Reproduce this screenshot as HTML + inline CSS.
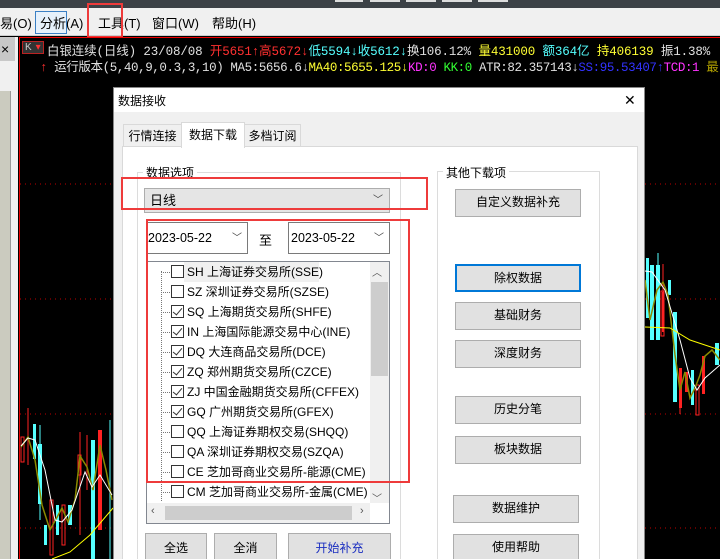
<!DOCTYPE html>
<html><head><meta charset="utf-8"><style>
*{margin:0;padding:0;box-sizing:border-box}
html,body{width:720px;height:559px;overflow:hidden}
body{position:relative;background:#000;font-family:"Liberation Sans","Noto Sans CJK SC",sans-serif;font-size:12px;color:#000}
.a{position:absolute}
.menu span{position:absolute;top:13px;font-size:13px}
.btn{position:absolute;background:#e1e1e1;border:1px solid #adadad;text-align:center;font-size:12px;line-height:25px}
.row{position:absolute;left:171px;height:20px;font-size:12px;line-height:20px;white-space:nowrap}
.cb{display:inline-block;width:13px;height:13px;border:1px solid #333;background:#fff;vertical-align:-2px;margin-right:3px;position:relative}
.cb.c::after{content:"";position:absolute;left:3px;top:0px;width:4px;height:8px;border:solid #333;border-width:0 1.5px 1.5px 0;transform:rotate(40deg)}
.dot{position:absolute;left:161px;width:9px;border-top:1px dotted #777}
.info{position:absolute;font-family:"Liberation Mono","Noto Sans CJK SC",monospace;font-size:12.5px;white-space:nowrap}
.w{color:#e0e0e0}.r{color:#ff3030}.c{color:#55ffff}.y{color:#ffff33}.m{color:#ff33ff}.g{color:#33ff33}.b{color:#3333ff}.o{color:#b0a000}
</style></head><body>
<div class="a" style="left:0;top:0;width:720px;height:8px;background:#3c4146"></div>
<div class="a" style="left:335px;top:0;width:28px;height:2px;background:#ddd"></div>
<div class="a" style="left:370px;top:0;width:30px;height:2px;background:#ddd"></div>
<div class="a" style="left:406px;top:0;width:30px;height:2px;background:#ddd"></div>
<div class="a" style="left:442px;top:0;width:30px;height:2px;background:#ddd"></div>
<div class="a" style="left:478px;top:0;width:30px;height:2px;background:#ddd"></div>
<div class="a menu" style="left:0;top:8px;width:720px;height:28px;background:#f0f0f0;border-bottom:1px solid #ccc">
<span style="left:0;top:5px">易(O)</span>
<div class="a" style="left:35px;top:3px;width:32px;height:23px;border:1px solid #3a7fc4;background:#e5f0fb"></div>
<span style="left:40px;top:5px">分析(A)</span>
<span style="left:98px;top:5px">工具(T)</span>
<span style="left:152px;top:5px">窗口(W)</span>
<span style="left:212px;top:5px">帮助(H)</span>
</div>
<div class="a" style="left:87px;top:3px;width:36px;height:35px;border:2px solid #ee3b3b"></div>
<div class="a" style="left:0;top:37px;width:18px;height:522px;background:#f0f0f0"></div>
<div class="a" style="left:0;top:37px;width:15px;height:24px;background:#c8c8c8;font-size:14px;line-height:24px;padding-left:1px">×</div>
<div class="a" style="left:0;top:91px;width:11px;height:468px;background:#cbcbbf;border-right:1px solid #999"></div>
<div class="a" style="left:19px;top:37px;width:1px;height:522px;background:#e00"></div>
<div class="a" style="left:19px;top:37px;width:701px;height:1px;background:#e00"></div>
<div class="a" style="left:22px;top:41px;width:22px;height:13px;border:1px solid #b22;background:#333;font-size:10px;color:#ccc;line-height:11px;padding-left:2px">K<span style="color:#f33;margin-left:4px">▾</span></div>
<div class="info" style="top:40px;left:47px;letter-spacing:-0.12px"><span class="w">白银连续(日线) 23/08/08 </span><span class="r">开5651↑高5672↓</span><span class="c">低5594↓收5612↓</span><span class="w">换106.12% </span><span class="y">量431000 </span><span class="c">额364亿 </span><span class="y">持406139 </span><span class="w">振1.38%</span></div>
<div class="info" style="top:56px;left:40px;letter-spacing:-0.4px"><span class="r">↑ </span><span class="w">运行版本(5,40,9,0.3,3,10) MA5:5656.6↓</span><span class="y">MA40:5655.125↓</span><span class="m">KD:0 </span><span class="g">KK:0 </span><span class="w">ATR:82.357143↓</span><span class="b">SS:95.53407↑</span><span class="m">TCD:1 </span><span class="o">最</span></div>
<svg class="a" style="left:0;top:0" width="720" height="559">
<g stroke="#b00" stroke-dasharray="1,4" stroke-width="1">
<line x1="20" y1="184" x2="720" y2="184"/><line x1="20" y1="299" x2="720" y2="299"/><line x1="20" y1="414" x2="720" y2="414"/><line x1="20" y1="528" x2="720" y2="528"/></g>
<g stroke-width="1">
<rect x="21" y="437" width="3" height="25" fill="none" stroke="#f22"/><line x1="28" y1="408" x2="28" y2="465" stroke="#f22"/>
<rect x="33" y="424" width="3" height="35" fill="#5ff"/><line x1="40" y1="425" x2="40" y2="520" stroke="#5ff"/><rect x="38" y="444" width="4" height="60" fill="#5ff"/>
<rect x="44" y="525" width="3" height="20" fill="#5ff"/><rect x="50" y="500" width="3" height="55" fill="none" stroke="#f22"/>
<rect x="56" y="505" width="3" height="30" fill="#5ff"/><rect x="62" y="505" width="3" height="40" fill="none" stroke="#f22"/>
<rect x="68" y="505" width="4" height="20" fill="#5ff"/><line x1="80" y1="432" x2="80" y2="535" stroke="#f22"/>
<rect x="78" y="455" width="3" height="20" fill="none" stroke="#f22"/><line x1="87" y1="435" x2="87" y2="490" stroke="#f22"/>
<rect x="91" y="440" width="4" height="120" fill="#5ff"/><rect x="98" y="430" width="4" height="100" fill="#f22"/><line x1="110" y1="420" x2="110" y2="559" stroke="#5ff"/>
</g>
<polyline points="21,447 28,437 35,460 42,505 50,530 56,519 62,508 68,522 75,500 80,456 87,467 93,490 100,445 106,470 112,500" fill="none" stroke="#8a8a00" stroke-width="1.5"/>
<polyline points="21,446 28,438 35,440 45,470 55,520 62,522 72,510 85,472 92,487 100,475 112,495" fill="none" stroke="#fff" stroke-width="1"/>
<polyline points="52,559 70,552 90,535 113,508" fill="none" stroke="#ff0" stroke-width="1"/>
<g>
<rect x="646" y="258" width="3" height="60" fill="#5ff"/><rect x="650" y="265" width="4" height="75" fill="#5ff"/>
<line x1="658" y1="253" x2="658" y2="340" stroke="#5ff"/><rect x="656" y="265" width="4" height="75" fill="#5ff"/>
<rect x="661" y="291" width="3" height="45" fill="none" stroke="#f22"/><rect x="662" y="292" width="2" height="40" fill="#f22"/>
<line x1="663" y1="264" x2="663" y2="301" stroke="#f22"/><rect x="668" y="280" width="3" height="15" fill="#5ff"/>
<rect x="673" y="312" width="4" height="90" fill="#5ff"/><rect x="679" y="368" width="3" height="40" fill="#f22"/>
<line x1="680" y1="375" x2="680" y2="414" stroke="#f22"/><rect x="685" y="372" width="3" height="20" fill="#f22"/>
<rect x="691" y="370" width="3" height="35" fill="#5ff"/><rect x="696" y="385" width="3" height="30" fill="none" stroke="#f22"/>
<rect x="702" y="356" width="3" height="38" fill="#f22"/><rect x="715" y="343" width="4" height="22" fill="#5ff"/>
</g>
<polyline points="645,280 650,320 657,290 663,282 668,295 675,355 680,390 685,372 690,398 695,388 700,375 705,356 712,350 720,360" fill="none" stroke="#8a8a00" stroke-width="1.5"/>
<polyline points="645,271 652,272 665,290 680,340 690,378 697,390 705,378 720,365" fill="none" stroke="#fff" stroke-width="1"/>
<polyline points="645,327 670,328 690,340 720,350" fill="none" stroke="#ff0" stroke-width="1"/>
</svg>
<div class="a" style="left:113px;top:87px;width:532px;height:472px;background:#f0f0f0;border:1px solid #888;border-bottom:none"></div>
<div class="a" style="left:114px;top:88px;width:530px;height:24px;background:#fff"></div>
<div class="a" style="left:118px;top:92px;font-size:12px">数据接收</div>
<div class="a" style="left:624px;top:88px;font-size:14px;line-height:24px">✕</div>
<div class="a" style="left:122px;top:146px;width:516px;height:413px;background:#fff;border:1px solid #d9d9d9;border-bottom:none"></div>
<div class="a" style="left:123px;top:124px;width:59px;height:23px;background:#f0f0f0;border:1px solid #d9d9d9;text-align:center;line-height:22px">行情连接</div>
<div class="a" style="left:181px;top:122px;width:64px;height:26px;background:#fff;border:1px solid #d9d9d9;border-bottom:none;text-align:center;line-height:24px">数据下载</div>
<div class="a" style="left:244px;top:124px;width:57px;height:23px;background:#f0f0f0;border:1px solid #d9d9d9;text-align:center;line-height:22px">多档订阅</div>
<div class="a" style="left:137px;top:172px;width:264px;height:387px;border:1px solid #dcdcdc;border-bottom:none"></div>
<div class="a" style="left:143px;top:164px;background:#fff;padding:0 3px">数据选项</div>
<div class="a" style="left:144px;top:188px;width:246px;height:25px;background:#e5e5e5;border:1px solid #adadad;line-height:23px;padding-left:5px;font-size:13px">日线<span style="position:absolute;right:6px;top:0;font-size:10px;color:#444">﹀</span></div>
<div class="a" style="left:146px;top:222px;width:102px;height:32px;background:#fff;border:1px solid #7a7a7a;line-height:30px;font-size:12.5px;padding-left:1px">2023-05-22<span style="position:absolute;right:5px;top:1px;font-size:10px;color:#444">﹀</span></div>
<div class="a" style="left:259px;top:230px;font-size:13px">至</div>
<div class="a" style="left:288px;top:222px;width:102px;height:32px;background:#fff;border:1px solid #7a7a7a;line-height:30px;font-size:12.5px;padding-left:2px">2023-05-22<span style="position:absolute;right:5px;top:1px;font-size:10px;color:#444">﹀</span></div>
<div class="a" style="left:146px;top:261px;width:244px;height:263px;background:#fff;border:1px solid #828790"></div>
<div class="a" style="left:161px;top:271px;height:230px;border-left:1px dotted #777"></div>
<div class="a" style="left:184px;top:262px;width:135px;height:20px;background:#f0f0f0"></div>
<div class="dot" style="top:272px"></div><div class="dot" style="top:292px"></div><div class="dot" style="top:312px"></div><div class="dot" style="top:332px"></div><div class="dot" style="top:352px"></div><div class="dot" style="top:372px"></div><div class="dot" style="top:392px"></div><div class="dot" style="top:412px"></div><div class="dot" style="top:432px"></div><div class="dot" style="top:452px"></div><div class="dot" style="top:472px"></div><div class="dot" style="top:492px"></div>
<div class="row" style="top:262px"><span class="cb"></span>SH 上海证券交易所(SSE)</div>
<div class="row" style="top:282px"><span class="cb"></span>SZ 深圳证券交易所(SZSE)</div>
<div class="row" style="top:302px"><span class="cb c"></span>SQ 上海期货交易所(SHFE)</div>
<div class="row" style="top:322px"><span class="cb c"></span>IN 上海国际能源交易中心(INE)</div>
<div class="row" style="top:342px"><span class="cb c"></span>DQ 大连商品交易所(DCE)</div>
<div class="row" style="top:362px"><span class="cb c"></span>ZQ 郑州期货交易所(CZCE)</div>
<div class="row" style="top:382px"><span class="cb c"></span>ZJ 中国金融期货交易所(CFFEX)</div>
<div class="row" style="top:402px"><span class="cb c"></span>GQ 广州期货交易所(GFEX)</div>
<div class="row" style="top:422px"><span class="cb"></span>QQ 上海证券期权交易(SHQQ)</div>
<div class="row" style="top:442px"><span class="cb"></span>QA 深圳证券期权交易(SZQA)</div>
<div class="row" style="top:462px"><span class="cb"></span>CE 芝加哥商业交易所-能源(CME)</div>
<div class="row" style="top:482px"><span class="cb"></span>CM 芝加哥商业交易所-金属(CME)</div>
<div class="a" style="left:370px;top:262px;width:19px;height:241px;background:#f0f0f0"></div>
<div class="a" style="left:372px;top:264px;font-size:10px;color:#555">︿</div>
<div class="a" style="left:372px;top:490px;font-size:10px;color:#555">﹀</div>
<div class="a" style="left:371px;top:282px;width:17px;height:94px;background:#cdcdcd"></div>
<div class="a" style="left:147px;top:503px;width:223px;height:20px;background:#f0f0f0"></div>
<div class="a" style="left:165px;top:506px;width:187px;height:14px;background:#cdcdcd"></div>
<div class="a" style="left:151px;top:505px;font-size:11px;color:#555">‹</div>
<div class="a" style="left:360px;top:505px;font-size:11px;color:#555">›</div>
<div class="a" style="left:146px;top:219px;width:264px;height:264px;border:2px solid #ee3b3b"></div>
<div class="a" style="left:121px;top:177px;width:307px;height:33px;border:2px solid #ee3b3b"></div>
<div class="btn" style="left:145px;top:533px;width:62px;height:30px;line-height:28px">全选</div>
<div class="btn" style="left:214px;top:533px;width:63px;height:30px;line-height:28px">全消</div>
<div class="btn" style="left:288px;top:533px;width:103px;height:30px;line-height:28px;color:#1a2ec0">开始补充</div>
<div class="a" style="left:437px;top:171px;width:163px;height:388px;border:1px solid #dcdcdc;border-bottom:none"></div>
<div class="a" style="left:443px;top:164px;background:#fff;padding:0 3px">其他下载项</div>
<div class="btn" style="left:455px;top:189px;width:126px;height:28px">自定义数据补充</div>
<div class="btn" style="left:455px;top:264px;width:126px;height:28px;border:2px solid #0078d7;line-height:24px">除权数据</div>
<div class="btn" style="left:455px;top:302px;width:126px;height:28px">基础财务</div>
<div class="btn" style="left:455px;top:340px;width:126px;height:28px">深度财务</div>
<div class="btn" style="left:455px;top:396px;width:126px;height:28px">历史分笔</div>
<div class="btn" style="left:455px;top:436px;width:126px;height:28px">板块数据</div>
<div class="btn" style="left:453px;top:495px;width:126px;height:28px">数据维护</div>
<div class="btn" style="left:453px;top:534px;width:126px;height:28px">使用帮助</div>
</body></html>
